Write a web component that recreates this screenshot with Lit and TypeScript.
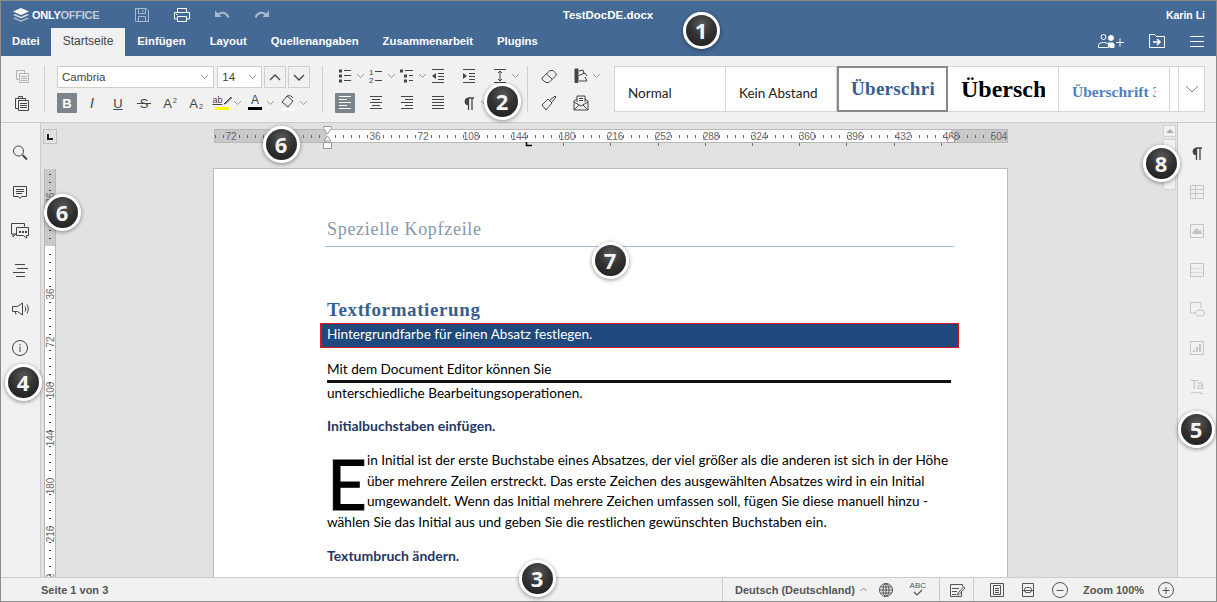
import { LitElement, html, svg, css, TemplateResult } from 'lit';
import { customElement } from 'lit/decorators.js';

const s = (body: TemplateResult, size = 20) =>
  html`<svg class="i" width=${size} height=${size} viewBox="0 0 20 20" fill="none" stroke="currentColor">${body}</svg>`;

const lines = (ys: [number, number, number][]) =>
  ys.map(([y, a, b]) => svg`<path d="M${a} ${y}.5H${b}"/>`);

const icons: Record<string, TemplateResult> = {
  save: svg`<path d="M3.500 3.500h11l2 2v11h-13z"/><path d="M6.500 3.500v5h7v-5M11 5v2M6.500 16.500v-5h7v5"/>`,
  print: svg`<path d="M5.500 7V3.500h9V7M5.500 14h-3V7.500h15V14h-3"/><path d="M5.500 11.500h9v5h-9z"/><path d="M4 9.500h1.500"/>`,
  undo: svg`<path d="M6 9.500c3.500-3 8-2.500 10.500 3" stroke-width="2"/><path d="M3 5.500v6.500h6.500z" fill="currentColor" stroke="none"/>`,
  redo: svg`<path d="M14 9.500c-3.500-3-8-2.500-10.500 3" stroke-width="2"/><path d="M17 5.500v6.500h-6.500z" fill="currentColor" stroke="none"/>`,
  open: svg`<path d="M2.500 16.500v-13h5l2 2h8v11z"/><path d="M6 11h6M10 8l3 3-3 3" stroke-width="1.500"/>`,
  menu: svg`<path d="M3 5.500h14M3 10.500h14M3 15.500h14"/>`,
  copy: svg`<path d="M4.500 4.500h8v3M4.500 4.500v9h3"/><path d="M7.500 7.500h9v9h-9z"/>${lines([[10, 9, 15], [12, 9, 15], [14, 9, 15]])}`,
  paste: svg`<path d="M3.500 5.500h10v2M3.500 5.500v10h3M6.500 3.500h4v2h-4z"/><path d="M6.500 7.500h10v10h-10z"/>${lines([[10, 8, 15], [12, 8, 15], [14, 8, 15]])}`,
  shade: svg`<path d="M9 3l6 5-5 6-6-5z"/><path d="M9 3c2-1 5 0 6 2"/><path d="M3 15h14v3H3z" fill="#fff" stroke="none"/>`,
  bullets: svg`<path d="M4 3.500h3v3H4zM4 8.500h3v3H4zM4 13.500h3v3H4z" fill="currentColor" stroke="none"/>${lines([[4, 9, 16], [9, 9, 16], [14, 9, 16]])}`,
  multi: svg`<path d="M3 3.500h3v3H3zM7 8.500h3v3H7zM7 13.500h3v3H7z" fill="currentColor" stroke="none"/>${lines([[4, 8, 16], [9, 12, 16], [14, 12, 16]])}`,
  outdent: svg`<path d="M8 7v6l-4-3z" fill="currentColor" stroke="none"/>${lines([[3, 4, 16], [7, 10, 16], [10, 10, 16], [13, 10, 16], [16, 4, 16]])}`,
  indent: svg`<path d="M4 7v6l4-3z" fill="currentColor" stroke="none"/>${lines([[3, 4, 16], [7, 10, 16], [10, 10, 16], [13, 10, 16], [16, 4, 16]])}`,
  spacing: svg`${lines([[3, 4, 16], [16, 4, 16]])}<path d="M10 5v10M8 7l2-2 2 2M8 13l2 2 2-2"/>`,
  alignL: svg`${lines([[3, 4, 16], [6, 4, 12], [9, 4, 16], [12, 4, 12], [15, 4, 16]])}`,
  alignC: svg`${lines([[3, 4, 16], [6, 6, 14], [9, 4, 16], [12, 6, 14], [15, 4, 16]])}`,
  alignR: svg`${lines([[3, 4, 16], [6, 8, 16], [9, 4, 16], [12, 8, 16], [15, 4, 16]])}`,
  alignJ: svg`${lines([[3, 4, 16], [6, 4, 16], [9, 4, 16], [12, 4, 16], [15, 4, 16]])}`,
  para: svg`<path d="M9 5h6M9.500 5v12M13 5v12" stroke-width="1.300"/><path d="M9.500 5a3.500 3.500 0 0 0 0 7z" fill="currentColor"/>`,
  eraser: svg`<path d="M3 12 11 4.500h3l3 3v2l-7 7H7l-4-3z" stroke-linejoin="round"/><path d="M7.500 8 13 13"/>`,
  fill: svg`<path d="M4 3h3v13.500H4z" fill="currentColor"/><path d="M8 5l4-1 1 4M8 9.500 14 7l2 3M8 15h8l-2-4"/>`,
  brush: svg`<path d="M3 12l6-6 4 4-6 7z" stroke-linejoin="round"/><path d="M11 7l5-4 1 1-4 5"/>`,
  mail: svg`<path d="M3 8v9h14V8l-3-2M3 8l3-2M3 9l7 4 7-4M3 17l5-5M17 17l-5-5"/><path d="M6 9V3h8v6M8 5.500h4M8 7.500h4"/>`,
  search: svg`<circle cx="8.500" cy="8" r="5"/><path d="M12.500 12l4.500 4.500" stroke-width="2"/>`,
  comment: svg`<path d="M3.500 4.500h13v10h-5l-1.500 2-1.500-2h-5z"/>${lines([[7, 6, 14], [9, 6, 14], [11, 6, 12]])}`,
  chat: svg`<path d="M6 13H1.500V2.500h13v3M3 13v3l3-3"/><path d="M6.500 6.500h12v8h-2v2.500l-3-2.500h-7z"/><path d="M9 10h2v2H9zM12 10h2v2h-2zM15 10h2v2h-2z" fill="currentColor" stroke="none"/>`,
  nav: svg`${lines([[4, 5, 15], [8, 7, 18], [12, 3, 15], [16, 6, 15]])}`,
  speak: svg`<path d="M2.500 7.500h5l5-3.500v12l-5-3.500h-5z"/><path d="M5 12.500l1 3M15 7.500c1 1.500 1 3.500 0 5M17 5.500c1.700 3 1.700 6 0 9"/>`,
  info: svg`<circle cx="10" cy="10" r="7.500"/><path d="M10 8.500v5.500M10 6v1.300"/>`,
  table: svg`<path d="M3.500 3.500h13v13h-13zM3.500 7.500h13M3.500 11.500h13M8.500 3.500v13"/>`,
  image: svg`<path d="M3.500 3.500h13v13h-13z"/><path d="M5.500 13V11l4-4 3 3 2-1v4z" fill="currentColor" stroke="none"/>`,
  headfoot: svg`<path d="M3.500 3.500h13v13h-13z"/><path d="M4 8.500h12M4 12.500h12" stroke-dasharray="1 1"/>`,
  shape: svg`<path d="M8 14H3.500V3.500H14V9"/><ellipse cx="13" cy="14" rx="4.500" ry="3"/>`,
  chart: svg`<path d="M3.500 3.500h13v13h-13z"/><path d="M6 12h2v2H6zM9 9h2v5H9zM12 6h2v8h-2z" fill="currentColor" stroke="none"/>`,
  art: svg`<path d="M3 17c3-2 9-2 13 0"/>`,
  globe: svg`<circle cx="10" cy="10" r="6.500"/><ellipse cx="10" cy="10" rx="3" ry="6.500"/><path d="M3.500 10h13M4.500 7h11M4.500 13h11M10 3.500v13"/>`,
  check: svg`<path d="M6 12l3 3 5-5" stroke-width="1.200"/>`,
  review: svg`<path d="M3.500 4.500h12v2M3.500 4.500v12h11V11"/>${lines([[8, 5, 12], [11, 5, 10], [14, 5, 9]])}<path d="M11 13l-1 2 2-.5 6-6.500-1.500-1z"/>`,
  fitPage: svg`<path d="M3.500 3.500h13v13h-13z"/><path d="M6.500 5.500h7v9h-7z"/>${lines([[8, 8, 12], [10, 8, 12], [12, 8, 12]])}`,
  fitWidth: svg`<path d="M4.500 3.500h11v13h-11z"/><rect x="6.500" y="7.500" width="7" height="5" rx="2"/><path d="M4 10.500h12"/>`,
  minus: svg`<circle cx="10" cy="10" r="7.500"/><path d="M6.500 10.500h7"/>`,
  plus: svg`<circle cx="10" cy="10" r="7.500"/><path d="M6.500 10.500h7M10 7v7"/>`,
};

const caret = html`<svg class="caret" width="9" height="6" viewBox="0 0 9 6" fill="none" stroke="currentColor"><path d="M1 1l3.500 3.500L8 1"/></svg>`;
const caretUp = html`<svg width="12" height="7" viewBox="0 0 12 7" fill="none" stroke="currentColor" stroke-width="1.300"><path d="M1 6l5-5 5 5"/></svg>`;
const caretBig = html`<svg width="12" height="7" viewBox="0 0 12 7" fill="none" stroke="currentColor" stroke-width="1.300"><path d="M1 1l5 5 5-5"/></svg>`;

const badges = [
  { n: 1, x: 701, y: 30 },
  { n: 2, x: 502, y: 101 },
  { n: 3, x: 537, y: 578 },
  { n: 4, x: 23, y: 382 },
  { n: 5, x: 1196, y: 429 },
  { n: 6, x: 281, y: 144 },
  { n: 6, x: 62, y: 212 },
  { n: 7, x: 610, y: 260 },
  { n: 8, x: 1161, y: 163 },
];

const range = (from: number, to: number, step: number) => {
  const out: number[] = [];
  for (let v = from; v <= to; v += step) out.push(v);
  return out;
};

// horizontal ruler: svg x 0 is screen x 213, zero of the scale sits at 114
function hRuler() {
  return html`<svg class="hruler" width="795" height="26" viewBox="0 0 795 26">
    <rect x="1.500" y="4.500" width="793" height="13" fill="#fff" stroke="#b8b8b8" />
    <rect x="2" y="5" width="112" height="12" fill="#c9c9c9" />
    <rect x="738" y="5" width="56" height="12" fill="#c9c9c9" />
    ${range(-112, 672, 8).map((d) =>
      d % 48 === 0
        ? ''
        : svg`<rect x=${114 + d} y="10" width="1" height="3" fill="#666" />`
    )}
    ${range(-96, 672, 48)
      .filter((d) => d !== 0 && d !== -48)
      .map((d) => {
        const label = Math.abs(Math.round((d / 48) * 36));
        return svg`<text x=${114 + d} y="15" text-anchor="middle" class="rt">${label}</text>`;
      })}
    ${[350, 397, 445, 492, 539, 586, 633, 681, 728].map(
      (x) => svg`<rect x=${x} y="18" width="1" height="3" fill="#777" />`
    )}
    <path d="M313.500 17v3.500h5.500" fill="none" stroke="#000" stroke-width="1.600" />
    <path d="M110.500 1.500h8v2l-4 5.500-4-5.500z" fill="#fff" stroke="#999" />
    <path d="M114.500 11l3.500 5H111z" fill="#fff" stroke="#999" />
    <rect x="110.500" y="17.500" width="8" height="6" fill="#fff" stroke="#999" />
    <path d="M734.500 17.500v-3l3.500-3 3.500 3v3z" fill="#fff" stroke="#999" />
  </svg>`;
}

// vertical ruler: svg y 0 is screen y 169, zero of the scale sits at 77
function vRuler() {
  return html`<svg class="vruler" width="14" height="408" viewBox="0 0 14 408">
    <rect x="1.500" y="-2" width="11" height="412" fill="#fff" stroke="#b8b8b8" />
    <rect x="2" y="0" width="10" height="77" fill="#c9c9c9" />
    ${range(-72, 330, 8).map((d) =>
      d % 48 === 0
        ? ''
        : svg`<rect x="6" y=${77 + d} width="2" height="1" fill="#444" />`
    )}
    ${range(-48, 336, 48)
      .filter((d) => d !== 0)
      .map((d) => {
        const label = Math.abs(Math.round((d / 48) * 36));
        const y = 77 + d;
        return svg`<text x="7" y=${y} transform="rotate(-90 7 ${y})" dy="3.500" text-anchor="middle" class="rt">${label}</text>`;
      })}
  </svg>`;
}

@customElement('app-root')
export class AppRoot extends LitElement {
  static styles = css`
    :host {
      display: block;
      width: 1217px;
      height: 602px;
      position: relative;
      overflow: hidden;
      font-family: 'Liberation Sans', Arial, sans-serif;
      color: #444;
    }
    .shell {
      box-sizing: border-box;
      width: 1217px;
      height: 602px;
      border: 1px solid #8b8b8b;
      display: flex;
      flex-direction: column;
      background: #f1f1f1;
    }
    .i {
      display: block;
      flex: none;
    }
    .header {
      background: #446995;
      color: #fff;
      height: 55px;
      flex: none;
    }
    .titlebar {
      height: 27px;
      display: grid;
      grid-template-columns: 1fr auto 1fr;
      align-items: center;
      font-size: 11px;
      font-weight: 700;
    }
    .titleleft {
      display: flex;
      align-items: center;
    }
    .logo {
      display: flex;
      align-items: center;
      gap: 2px;
      margin-left: 11px;
      width: 120px;
      font-size: 11px;
      letter-spacing: -0.25px;
    }
    .logo span {
      opacity: 0.65;
    }
    .quick {
      display: flex;
      gap: 20px;
    }
    .dim {
      opacity: 0.55;
    }
    .doctitle {
      font-size: 11.5px;
      margin-right: 1px;
    }
    .user {
      text-align: right;
      padding-right: 11px;
      font-size: 10.5px;
    }
    .tabs {
      height: 28px;
      display: flex;
      font-size: 11.3px;
      font-weight: 700;
    }
    .tab {
      padding: 0 12px;
      line-height: 27px;
    }
    .tab:first-child {
      padding-left: 11px;
      padding-right: 11px;
    }
    .tab.on {
      background: #f1f1f1;
      color: #444;
      font-size: 12px;
      font-weight: 400;
    }
    .headtools {
      margin-left: auto;
      display: flex;
      align-items: center;
      padding-right: 9px;
      gap: 20px;
      margin-top: -2px;
    }
    .adduser {
      margin-right: 2px;
    }
    .toolbar {
      height: 67px;
      flex: none;
      box-sizing: border-box;
      border-bottom: 1px solid #cbcbcb;
      padding: 10px 0 9px;
      display: flex;
    }
    .sep {
      width: 1px;
      background: #cfcfcf;
      flex: none;
      height: 46px;
      margin-left: 12px;
    }
    .group {
      display: flex;
      flex-direction: column;
      justify-content: space-between;
      margin-left: 12px;
      height: 47px;
    }
    .row {
      display: flex;
      align-items: center;
    }
    .btn {
      width: 20px;
      height: 20px;
      display: flex;
      align-items: center;
      justify-content: center;
      flex: none;
      color: #444;
      font-size: 13px;
    }
    .btn.on {
      background: #7d858c;
      color: #fff;
      border-radius: 1px;
    }
    .btn.off {
      color: #b4b4b4;
    }
    .btn.strike {
      position: relative;
      font-size: 13px;
    }
    .btn.strike::after {
      content: '';
      position: absolute;
      left: 3px;
      right: 3px;
      top: 10px;
      height: 1px;
      background: #444;
    }
    .btn small {
      font-size: 7px;
      margin-left: 1px;
    }
    .btn small.up {
      margin-bottom: 6px;
    }
    .btn small.dn {
      margin-top: 6px;
    }
    .swatch {
      flex-direction: column;
      justify-content: flex-start;
      font-size: 12px;
      line-height: 14px;
    }
    .swatch .bar {
      width: 14px;
      height: 3px;
      flex: none;
    }
    .swatch .ab {
      display: flex;
      align-items: center;
      font-size: 9px;
      height: 14px;
      text-decoration: underline;
    }
    .fmt {
      gap: 6px;
    }
    .caret {
      color: #999;
      flex: none;
      margin-left: 1px;
    }
    .cell31 {
      width: 31px;
      display: flex;
      align-items: center;
      flex: none;
    }
    .combo {
      box-sizing: border-box;
      height: 22px;
      background: #fff;
      border: 1px solid #cfcfcf;
      display: flex;
      align-items: center;
      justify-content: space-between;
      padding: 0 4px;
      font-size: 11.5px;
      color: #444;
    }
    .step {
      box-sizing: border-box;
      width: 22px;
      height: 22px;
      border: 1px solid #cfcfcf;
      display: flex;
      align-items: center;
      justify-content: center;
      color: #444;
    }
    .gallery {
      margin-left: 13px;
      width: 591px;
      height: 46px;
      box-sizing: border-box;
      background: #fff;
      border: 1px solid #d4d4d4;
      display: flex;
      flex: none;
    }
    .style {
      box-sizing: border-box;
      width: 111px;
      flex: none;
      border-right: 1px solid #d4d4d4;
      padding-left: 13px;
      white-space: nowrap;
      display: flex;
      align-items: center;
      color: #222;
      font-family: Lato, sans-serif;
      font-size: 13.5px;
    }
    .clip {
      display: block;
      width: 84px;
      overflow: hidden;
    }
    .style.normal {
      padding-top: 8px;
    }
    .style.h1 {
      border: 2px solid #888;
      margin: -1px 0;
      height: 46px;
      padding-left: 12px;
      font: 700 19px 'Liberation Serif', serif;
      color: #365f91;
      letter-spacing: 0.3px;
    }
    .style.h2 {
      font: 700 24px 'Liberation Serif', serif;
      color: #000;
    }
    .style.h3 {
      padding-top: 6px;
      font: 700 15.5px 'Liberation Serif', serif;
      color: #4f81bd;
    }
    .blank {
      width: 8px;
      border-right: 1px solid #d4d4d4;
      flex: none;
    }
    .more {
      flex: 1;
      display: flex;
      align-items: center;
      justify-content: center;
      color: #888;
    }
    .main {
      flex: 1;
      min-height: 0;
      display: flex;
    }
    .side {
      box-sizing: border-box;
      width: 40px;
      flex: none;
      padding-top: 20px;
      display: flex;
      flex-direction: column;
      align-items: center;
      gap: 19px;
      color: #444;
    }
    .side.left {
      border-right: 1px solid #cbcbcb;
      padding-right: 1px;
    }
    .side.right {
      width: 39px;
      border-left: 1px solid #cbcbcb;
      color: #c4c4c4;
    }
    .side.right .active {
      color: #444;
    }
    .ta {
      height: 20px;
      width: 20px;
      position: relative;
      font-size: 13px;
      text-align: center;
      line-height: 16px;
    }
    .ta svg {
      position: absolute;
      top: 0;
      left: 0;
    }
    .canvas {
      flex: 1;
      min-width: 0;
      background: #e2e2e2;
      display: grid;
      grid-template-columns: 172px 795px 1fr;
      grid-template-rows: 45px 1fr;
      overflow: hidden;
    }
    .corner {
      box-sizing: border-box;
      width: 14px;
      height: 15px;
      margin: 6px 0 0 2px;
      border: 1px solid #c0c0c0;
      display: flex;
      align-items: center;
      justify-content: center;
    }
    .corner::before {
      content: '';
      width: 4px;
      height: 4px;
      border-left: 2px solid #222;
      border-bottom: 2px solid #222;
    }
    .hruler {
      display: block;
      margin-top: 2px;
    }
    .vruler {
      display: block;
      margin: 1px 0 0 2px;
    }
    .rt {
      font-family: 'Liberation Sans', Arial, sans-serif;
      font-size: 10px;
      fill: #666;
    }
    .scroll {
      grid-column: 3;
      grid-row: 1 / 3;
      justify-self: end;
      width: 13px;
      margin-right: 1px;
      padding: 2px 0 1px;
      box-sizing: border-box;
      display: flex;
      flex-direction: column;
      gap: 2px;
    }
    .sbtn,
    .thumb {
      box-sizing: border-box;
      border: 1px solid #d4d4d4;
      background: #f1f1f1;
      flex: none;
    }
    .sbtn {
      height: 12px;
      display: flex;
      align-items: center;
      justify-content: center;
    }
    .sbtn.up::before,
    .sbtn.down::before {
      content: '';
      border: 4px solid transparent;
    }
    .sbtn.up::before {
      border-bottom: 4px solid #adadad;
      border-top: 0;
    }
    .sbtn.down::before {
      border-top: 4px solid #adadad;
      border-bottom: 0;
    }
    .thumb {
      height: 51px;
      margin-bottom: auto;
    }
    .page {
      box-sizing: border-box;
      background: #fff;
      border: 1px solid #bbb;
      border-bottom: 0;
      height: 600px;
      padding: 49px 56px 0 113px;
      font-family: Lato, sans-serif;
      font-size: 13.6px;
      color: #000;
      white-space: nowrap;
    }
    .pagehead {
      margin: 0 -3px 0 -2px;
      padding: 0 0 6px 2px;
      border-bottom: 1px solid #a4bbd8;
      font: 400 18px/22px 'Liberation Serif', serif;
      letter-spacing: 0.7px;
      color: #8797ad;
    }
    .h {
      margin-top: 51px;
      font: 700 19px/24px 'Liberation Serif', serif;
      color: #365f91;
      letter-spacing: 0.6px;
    }
    .band {
      box-sizing: border-box;
      margin: 1px -8px 0 -7px;
      height: 25px;
      line-height: 21px;
      padding-left: 5px;
      background: #1f497d;
      color: #fff;
      border: 1px solid #e0151f;
      border-left-width: 2px;
    }
    .l {
      line-height: 21px;
    }
    .mt11 {
      margin-top: 11px;
    }
    .rule {
      height: 3px;
      background: #111;
      margin: 0 0 -1px;
    }
    .after {
      margin-top: 1px;
    }
    .sub {
      font-size: 14px;
      font-weight: 700;
      line-height: 21px;
      color: #1f3864;
    }
    .mt11b {
      margin-top: 11px;
    }
    .mt12 {
      margin-top: 12px;
    }
    .para {
      margin-top: 14px;
      line-height: 20.67px;
    }
    .drop {
      float: left;
      width: 40px;
      height: 62px;
      font-size: 69px;
      font-weight: 400;
      line-height: 67px;
      -webkit-text-stroke: 1px #000;
    }
    .status {
      height: 24px;
      flex: none;
      box-sizing: border-box;
      border-top: 1px solid #cbcbcb;
      display: flex;
      align-items: center;
      font-size: 11px;
      font-weight: 700;
      color: #555;
    }
    .pages {
      margin-left: 40px;
      margin-right: auto;
    }
    .stsec {
      height: 100%;
      display: flex;
      align-items: center;
      box-sizing: border-box;
      border-left: 1px solid #cbcbcb;
    }
    .abc {
      font-size: 8px;
      font-weight: 400;
      line-height: 12px;
    }
    .badge {
      position: absolute;
      box-sizing: border-box;
      width: 37px;
      height: 37px;
      margin: -18.5px 0 0 -18.5px;
      border-radius: 50%;
      border: 3px solid #fff;
      background: radial-gradient(circle at 50% 30%, #5a5a5a 0%, #333 45%, #1c1c1c 100%);
      box-shadow: 0 1px 4px rgba(0, 0, 0, 0.45);
      color: #f4f4f4;
      font: 700 22px/31px 'Open Sans', sans-serif;
      text-align: center;
    }
  `;

  private btn(name: string, cls = '') {
    return html`<div class="btn ${cls}">${s(icons[name])}</div>`;
  }

  private withCaret(body: TemplateResult, width = 31) {
    return html`<div class="cell31" style="width:${width}px">${body}${caret}</div>`;
  }

  private renderHeader() {
    return html`<div class="header">
      <div class="titlebar">
        <div class="titleleft">
          <div class="logo">
            <svg width="18" height="16" viewBox="0 0 18 16" fill="#fff">
              <path d="M9 1l8 3.500-8 3.500-8-3.500z" />
              <path opacity=".75" d="M3 7l6 2.700L15 7l2 1-8 3.500L1 8z" />
              <path opacity=".5" d="M3 10.500l6 2.700 6-2.700 2 1L9 15l-8-3.500z" />
            </svg>
            <div>ONLY<span>OFFICE</span></div>
          </div>
          <div class="quick">
            <div class="dim">${s(icons.save)}</div>
            ${s(icons.print)}
            <div class="dim">${s(icons.undo)}</div>
            <div class="dim">${s(icons.redo)}</div>
          </div>
        </div>
        <div class="doctitle">TestDocDE.docx</div>
        <div class="user">Karin Li</div>
      </div>
      <div class="tabs">
        ${['Datei', 'Startseite', 'Einfügen', 'Layout', 'Quellenangaben', 'Zusammenarbeit', 'Plugins'].map(
          (t) => html`<div class="tab ${t === 'Startseite' ? 'on' : ''}">${t}</div>`
        )}
        <div class="headtools">
          <svg class="i adduser" width="28" height="20" viewBox="0 0 28 20" fill="none" stroke="#fff">
            <circle cx="6.500" cy="6" r="2.500" />
            <path d="M1.500 16.500v-2c0-2 2-3 5-3s5 1 5 3v2z" />
            <circle cx="14" cy="7" r="2.500" fill="#fff" />
            <path d="M11 12h5l1 1v3.500h-4z" fill="#fff" />
            <path d="M19 11.500h8M23 7.500v8" />
          </svg>
          ${s(icons.open)} ${s(icons.menu)}
        </div>
      </div>
    </div>`;
  }

  private renderToolbar() {
    return html`<div class="toolbar">
      <div class="group" style="margin-left:11px">
        ${this.btn('copy', 'off')} ${this.btn('paste')}
      </div>
      <div class="sep"></div>
      <div class="group" style="width:253px">
        <div class="row">
          <div class="combo" style="width:158px">Cambria ${caret}</div>
          <div class="combo" style="width:45px;margin-left:3px">14 ${caret}</div>
          <div class="step" style="margin-left:2px">${caretUp}</div>
          <div class="step" style="margin-left:2px">${caretBig}</div>
        </div>
        <div class="row fmt">
          <div class="btn on"><b>B</b></div>
          <div class="btn" style="margin-left:-1px;font-size:14px"><i>I</i></div>
          <div class="btn" style="text-decoration:underline">U</div>
          <div class="btn strike">S</div>
          <div class="btn">A<small class="up">2</small></div>
          <div class="btn">A<small class="dn">2</small></div>
          ${this.withCaret(
            html`<div class="btn swatch">
              <div class="ab">ab
                <svg width="9" height="9" viewBox="0 0 9 9" fill="none" stroke="currentColor"><path d="M8 1 3 6 1 8l2.500-1L8.500 2z"/></svg>
              </div>
              <div class="bar" style="background:#ffff00"></div>
            </div>`,
            27
          )}
          ${this.withCaret(
            html`<div class="btn swatch">A<div class="bar" style="background:#000"></div></div>`,
            27
          )}
          ${this.withCaret(this.btn('shade'), 27)}
        </div>
      </div>
      <div class="sep"></div>
      <div class="group">
        <div class="row">
          ${this.withCaret(this.btn('bullets'))}
          ${this.withCaret(html`<div class="btn">
            <svg class="i" width="20" height="20" viewBox="0 0 20 20" fill="none" stroke="currentColor">
              <text x="3" y="9" font-size="8" fill="currentColor" stroke="none" font-family="Liberation Sans">1</text>
              <text x="3" y="17" font-size="8" fill="currentColor" stroke="none" font-family="Liberation Sans">2</text>
              <path d="M9 5.500h7M9 14.500h7" />
            </svg>
          </div>`)}
          ${this.withCaret(this.btn('multi'))}
          <div class="cell31">${this.btn('outdent')}</div>
          <div class="cell31">${this.btn('indent')}</div>
          ${this.withCaret(this.btn('spacing'))}
        </div>
        <div class="row">
          <div class="cell31">${this.btn('alignL', 'on')}</div>
          <div class="cell31">${this.btn('alignC')}</div>
          <div class="cell31">${this.btn('alignR')}</div>
          <div class="cell31">${this.btn('alignJ')}</div>
          ${this.withCaret(this.btn('para'))}
        </div>
      </div>
      <div class="sep" style="margin-left:6px"></div>
      <div class="group" style="margin-left:11px;width:62px">
        <div class="row">
          ${this.btn('eraser')}
          <div style="width:12px"></div>
          ${this.btn('fill')}${caret}
        </div>
        <div class="row">
          ${this.btn('brush')}
          <div style="width:12px"></div>
          ${this.btn('mail')}
        </div>
      </div>
      <div class="gallery">
        <div class="style normal">Normal</div>
        <div class="style normal">Kein Abstand</div>
        <div class="style h1"><span class="clip">Überschrift 1</span></div>
        <div class="style h2"><span class="clip">Überschrift 2</span></div>
        <div class="style h3"><span class="clip">Überschrift 3</span></div>
        <div class="blank"></div>
        <div class="more">
          <svg width="14" height="8" viewBox="0 0 14 8" fill="none" stroke="currentColor"><path d="M1 1l6 6 6-6" /></svg>
        </div>
      </div>
    </div>`;
  }

  private renderPage() {
    return html`<div class="page">
      <div class="pagehead">Spezielle Kopfzeile</div>
      <div class="h">Textformatierung</div>
      <div class="band">Hintergrundfarbe für einen Absatz festlegen.</div>
      <div class="l mt11">Mit dem Document Editor können Sie</div>
      <div class="rule"></div>
      <div class="l after">unterschiedliche Bearbeitungsoperationen.</div>
      <div class="sub mt11b">Initialbuchstaben einfügen.</div>
      <div class="para">
        <div class="drop">E</div>
        in Initial ist der erste Buchstabe eines Absatzes, der viel größer als die anderen ist sich in der Höhe<br />
        über mehrere Zeilen erstreckt. Das erste Zeichen des ausgewählten Absatzes wird in ein Initial<br />
        umgewandelt. Wenn das Initial mehrere Zeichen umfassen soll, fügen Sie diese manuell hinzu -<br />
        wählen Sie das Initial aus und geben Sie die restlichen gewünschten Buchstaben ein.
      </div>
      <div class="sub mt12">Textumbruch ändern.</div>
    </div>`;
  }

  private renderStatus() {
    return html`<div class="status">
      <div class="pages">Seite 1 von 3</div>
      <div class="stsec" style="width:217px;padding-left:12px">
        <span>Deutsch (Deutschland)</span>
        <svg style="margin-left:5px" width="7" height="5" viewBox="0 0 7 5" fill="none" stroke="#888"><path d="M.5 4 3.500 1l3 3" /></svg>
        <div style="margin-left:9px">${s(icons.globe)}</div>
        <div class="ta abc" style="margin-left:12px">ABC${s(icons.check)}</div>
      </div>
      <div class="stsec" style="width:34px;padding-left:7px">${s(icons.review)}</div>
      <div class="stsec" style="width:243px;padding-left:13px">
        ${s(icons.fitPage)}
        <div style="margin-left:11px">${s(icons.fitWidth)}</div>
        <div style="margin-left:12px">${s(icons.minus)}</div>
        <div style="margin-left:13px;width:63px">Zoom 100%</div>
        <div style="margin-left:10px">${s(icons.plus)}</div>
      </div>
    </div>`;
  }

  render() {
    return html`<div class="shell">
        ${this.renderHeader()} ${this.renderToolbar()}
        <div class="main">
          <div class="side left">
            ${['search', 'comment', 'chat', 'nav', 'speak', 'info'].map((n) => s(icons[n]))}
          </div>
          <div class="canvas">
            <div><div class="corner"></div></div>
            <div>${hRuler()}</div>
            <div class="scroll">
              <div class="sbtn up"></div>
              <div class="thumb"></div>
              <div class="sbtn down"></div>
            </div>
            <div>${vRuler()}</div>
            <div>${this.renderPage()}</div>
          </div>
          <div class="side right">
            <div class="active">${s(icons.para)}</div>
            ${['table', 'image', 'headfoot', 'shape', 'chart'].map((n) => s(icons[n]))}
            <div class="ta">Ta${s(icons.art)}</div>
          </div>
        </div>
        ${this.renderStatus()}
      </div>
      ${badges.map(
        (b) => html`<div class="badge" style="left:${b.x}px;top:${b.y}px">${b.n}</div>`
      )}`;
  }
}
